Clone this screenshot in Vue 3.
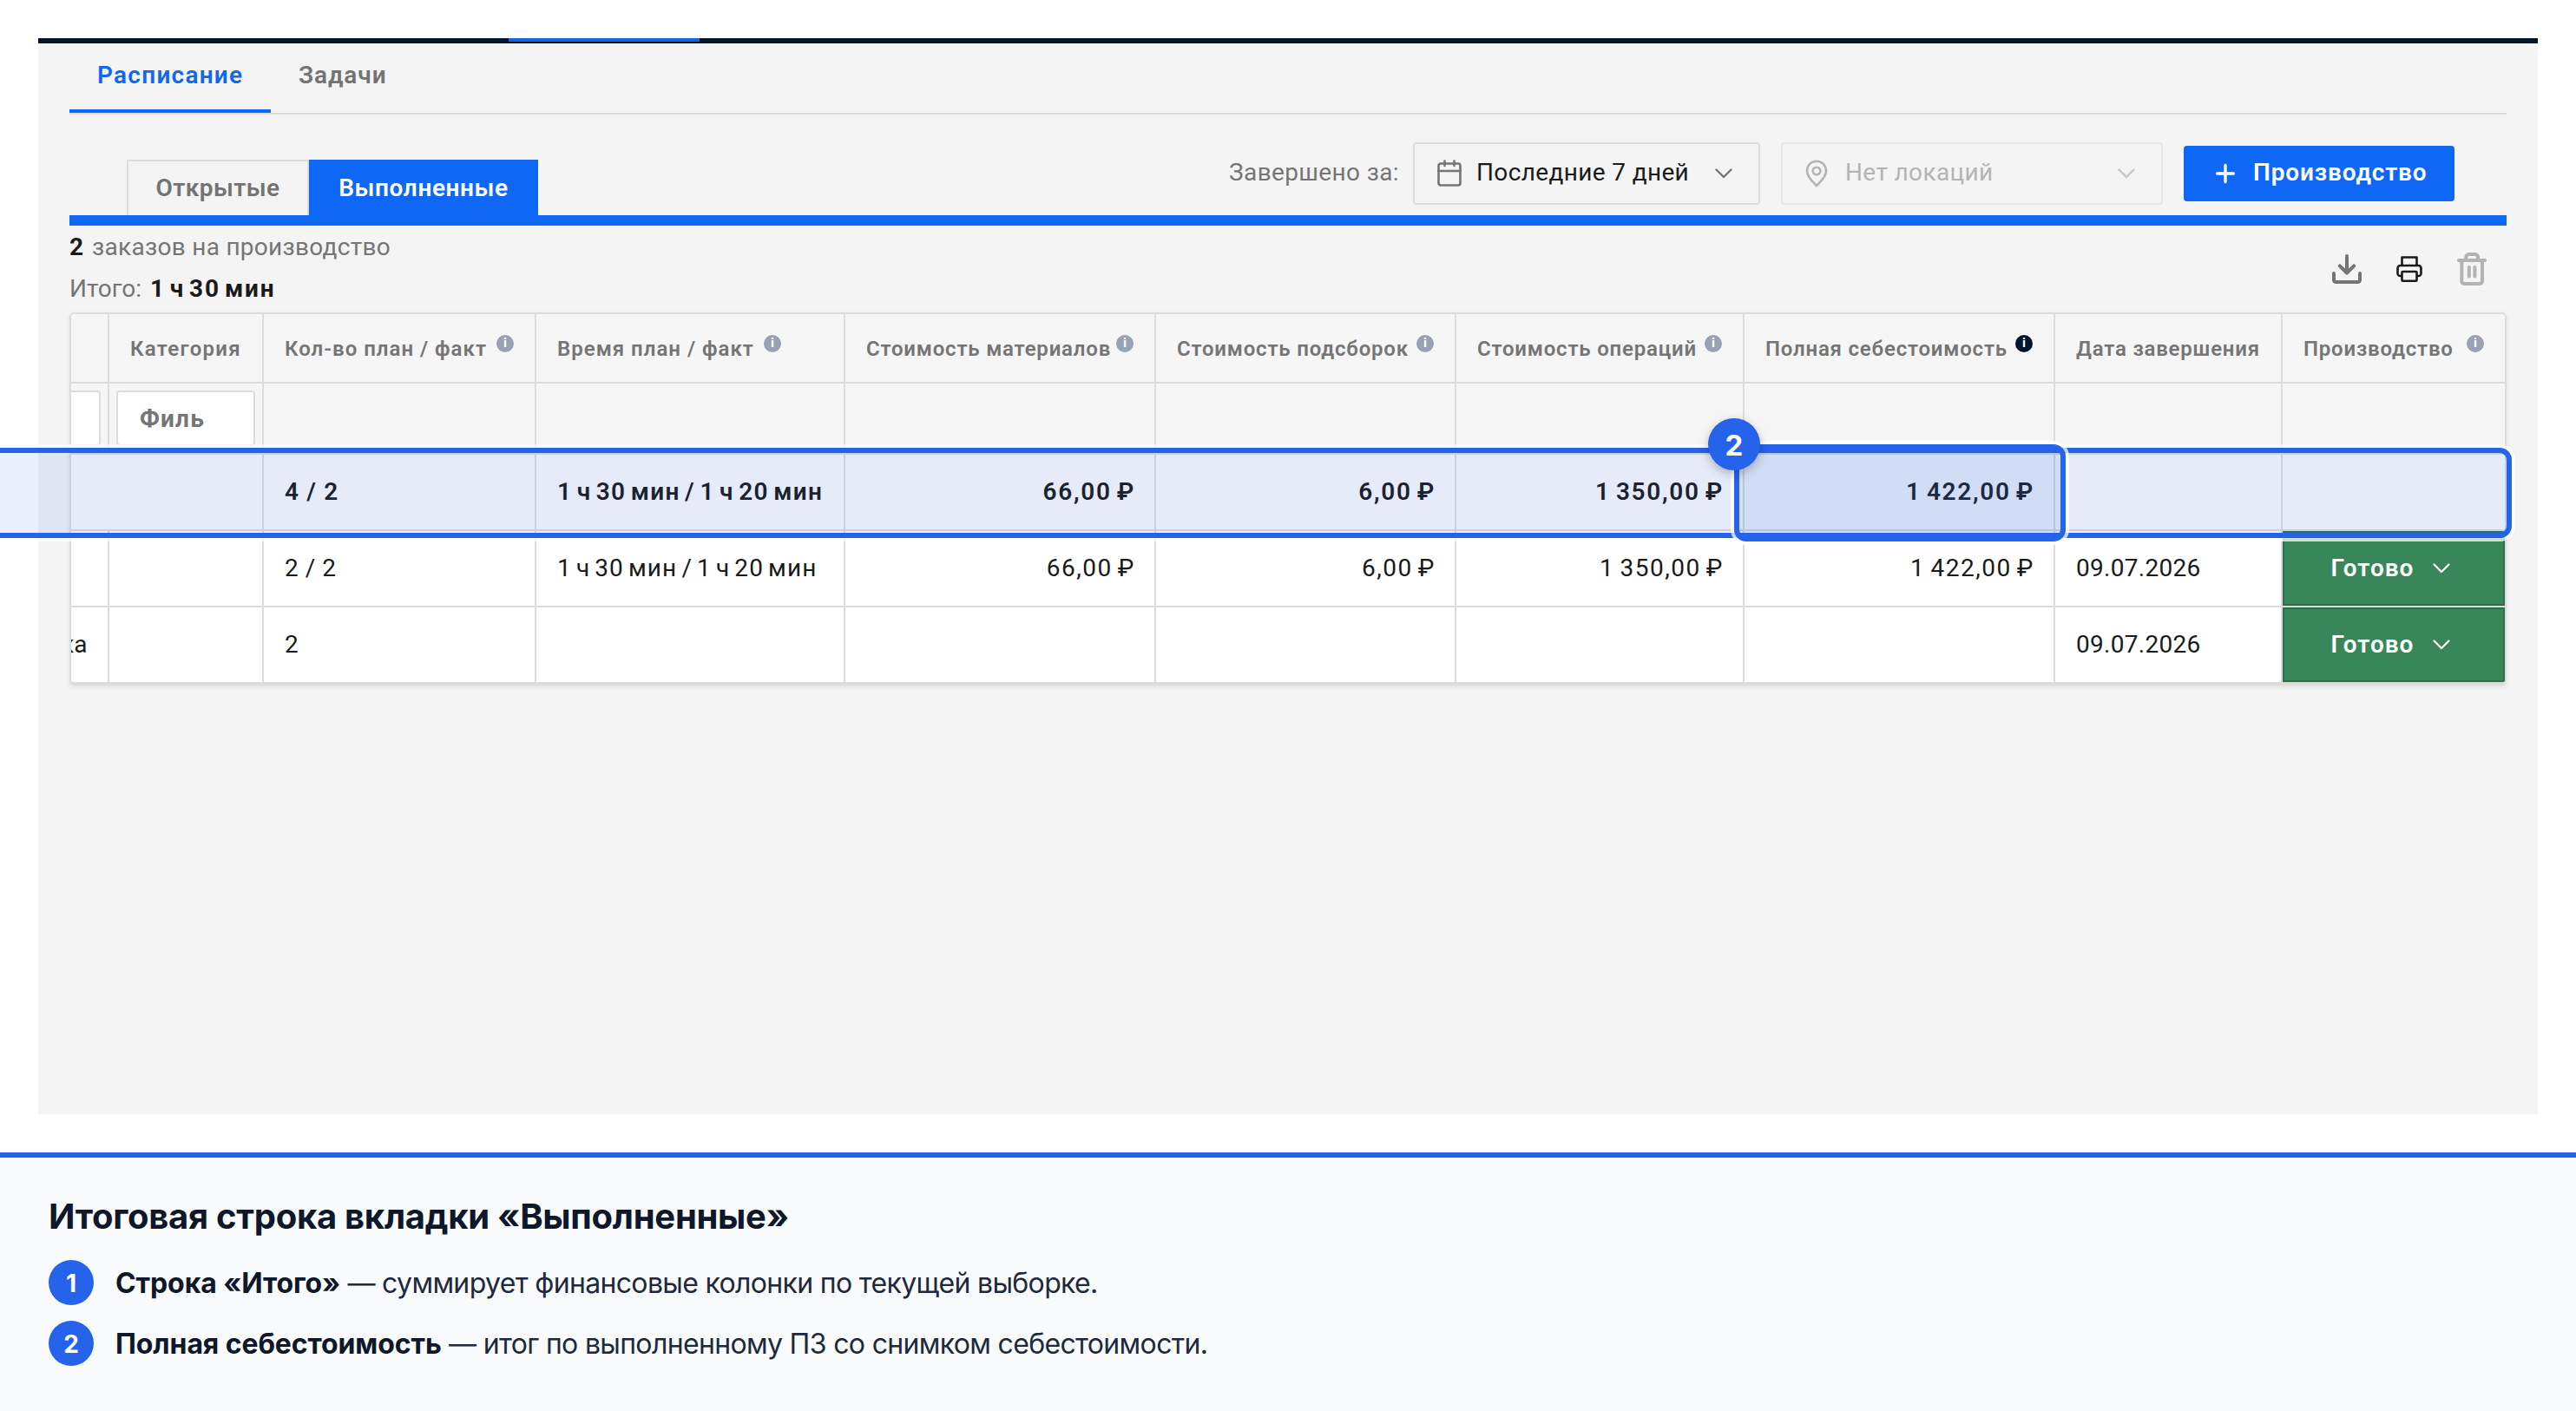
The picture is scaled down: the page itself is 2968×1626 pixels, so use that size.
<script setup>
/**
 * ProductionSchedule
 * - Completed production orders with a totals row
 * - Callouts over the table and a legend under it
 */
const columns = [
  { key: 'name', title: '' },
  { key: 'category', title: 'Категория', filter: true },
  { key: 'qty', title: 'Кол-во план / факт', info: true },
  { key: 'time', title: 'Время план / факт', info: true },
  { key: 'materials', title: 'Стоимость материалов', info: true, num: true },
  { key: 'parts', title: 'Стоимость подсборок', info: true, num: true },
  { key: 'operations', title: 'Стоимость операций', info: true, num: true },
  { key: 'total', title: 'Полная себестоимость', info: true, num: true, dark: true },
  { key: 'date', title: 'Дата завершения' },
  { key: 'status', title: 'Производство', info: true },
]

const totals = {
  qty: '4 / 2',
  time: '1 ч 30 мин / 1 ч 20 мин',
  materials: '66,00 ₽',
  parts: '6,00 ₽',
  operations: '1 350,00 ₽',
  total: '1 422,00 ₽',
}

const rows = [
  {
    id: 1,
    qty: '2 / 2',
    time: '1 ч 30 мин / 1 ч 20 мин',
    materials: '66,00 ₽',
    parts: '6,00 ₽',
    operations: '1 350,00 ₽',
    total: '1 422,00 ₽',
    date: '09.07.2026',
    status: 'Готово',
  },
  { id: 2, name: 'ка', qty: '2', date: '09.07.2026', status: 'Готово' },
]

const legend = [
  { n: 1, term: 'Строка «Итого»', text: 'суммирует финансовые колонки по текущей выборке.' },
  { n: 2, term: 'Полная себестоимость', text: 'итог по выполненному ПЗ со снимком себестоимости.' },
]
</script>

<template>
  <div class="page">
    <main class="panel">
      <div class="topbar"><span class="topbar-active"></span></div>

      <nav class="tabs">
        <a class="tab active">Расписание</a>
        <a class="tab">Задачи</a>
      </nav>

      <div class="toolbar">
        <div class="subtabs">
          <button class="subtab">Открытые</button>
          <button class="subtab active">Выполненные</button>
        </div>
        <div class="filters">
          <span class="label">Завершено за:</span>
          <div class="select">
            <svg class="ico-cal" viewBox="0 0 28 32" fill="none" stroke="currentColor" stroke-width="2.6" stroke-linecap="round">
              <rect x="1.5" y="4.5" width="25" height="25" rx="2.5" />
              <path d="M1.5 13h25M8.5 1.5v5.5M19.5 1.5v5.5" />
            </svg>
            <span class="value">Последние 7 дней</span>
            <svg class="chev" viewBox="0 0 20 12" fill="none" stroke="currentColor" stroke-width="2.4" stroke-linecap="round" stroke-linejoin="round"><path d="M1.5 1.5l8.5 8.5 8.5-8.5" /></svg>
          </div>
          <div class="select disabled">
            <svg class="ico-pin" viewBox="0 0 26 32" fill="none" stroke="currentColor" stroke-width="2.6" stroke-linejoin="round">
              <path d="M13 30C10 27 2 20 2 12.7a11 11 0 0 1 22 0C24 20 16 27 13 30z" />
              <circle cx="13" cy="13" r="4.3" />
            </svg>
            <span class="value">Нет локаций</span>
            <svg class="chev" viewBox="0 0 20 12" fill="none" stroke="currentColor" stroke-width="2.4" stroke-linecap="round" stroke-linejoin="round"><path d="M1.5 1.5l8.5 8.5 8.5-8.5" /></svg>
          </div>
          <button class="primary">
            <svg class="ico-plus" viewBox="0 0 24 24" fill="none" stroke="currentColor" stroke-width="3.4" stroke-linecap="round"><path d="M12 2.5v19M2.5 12h19" /></svg>
            <span>Производство</span>
          </button>
        </div>
      </div>

      <div class="summary">
        <div class="counts">
          <p><b>2</b> <span class="cnt">заказов на производство</span></p>
          <p>Итого: <b class="sum">1 ч 30 мин</b></p>
        </div>
        <div class="actions">
          <svg class="act" viewBox="0 0 40 40" fill="none" stroke="#757575" stroke-width="4" stroke-linecap="round" stroke-linejoin="round">
            <path d="M20 5v19M11.8 16.3l8.2 8.2 8.2-8.2M5 25v7.5a2.5 2.5 0 0 0 2.5 2.5h25a2.5 2.5 0 0 0 2.5-2.5V25" />
          </svg>
          <svg class="act" viewBox="0 0 40 40" fill="none" stroke="#1a1a1a" stroke-width="2.6" stroke-linejoin="round">
            <path d="M11.5 16V6.5h17V16M11.5 28H9.5a3 3 0 0 1-3-3V19a3 3 0 0 1 3-3h21a3 3 0 0 1 3 3v6a3 3 0 0 1-3 3h-2" />
            <rect x="11.5" y="23" width="17" height="10.7" rx="1" />
          </svg>
          <svg class="act" viewBox="0 0 40 40" fill="none" stroke="#b3b3b3" stroke-width="4" stroke-linecap="round" stroke-linejoin="round">
            <path d="M5 10h30M13.3 10V6.5a3.5 3.5 0 0 1 3.5-3.5h6.7A3.5 3.5 0 0 1 27 6.5V10M8.3 10v24a3 3 0 0 0 3 3h17.7a3 3 0 0 0 3-3V10M16.8 18v10.5M23.4 18v10.5" />
          </svg>
        </div>
      </div>

      <div class="table-wrap">
        <div class="grid">
          <div class="tr head">
            <div v-for="c in columns" :key="c.key" class="th" :class="[c.key, { num: c.num }]">
              <span>{{ c.title }}</span>
              <i v-if="c.info" class="info" :class="{ dark: c.dark }">i</i>
            </div>
          </div>
          <div class="tr filter">
            <div v-for="c in columns" :key="c.key" class="th" :class="c.key">
              <div v-if="c.key === 'name'" class="field cut"></div>
              <div v-if="c.filter" class="field">Филь</div>
            </div>
          </div>
          <div class="tr totals">
            <div v-for="c in columns" :key="c.key" class="td" :class="[c.key, { num: c.num }]">{{ totals[c.key] }}</div>
          </div>
          <div v-for="r in rows" :key="r.id" class="tr">
            <div v-for="c in columns" :key="c.key" class="td" :class="[c.key, { num: c.num }]">
              <button v-if="c.key === 'status'" class="status">
                <span>{{ r.status }}</span>
                <svg class="chev" viewBox="0 0 20 12" fill="none" stroke="currentColor" stroke-width="2.2" stroke-linecap="round" stroke-linejoin="round"><path d="M1.5 1.5l8.5 8.5 8.5-8.5" /></svg>
              </button>
              <span v-else>{{ r[c.key] }}</span>
            </div>
          </div>
        </div>
        <div class="mark mark-row"></div>
        <div class="mark mark-cell"><span class="badge pin">2</span></div>
      </div>
    </main>

    <footer class="legend">
      <h1>Итоговая строка вкладки «Выполненные»</h1>
      <p v-for="l in legend" :key="l.n" class="item">
        <span class="badge">{{ l.n }}</span>
        <span class="line"><b>{{ l.term }}</b> — {{ l.text }}</span>
      </p>
    </footer>
  </div>
</template>

<style>
body { background: #fff; }
</style>

<style scoped>
* { box-sizing: border-box; }
p, h1 { margin: 0; }
button { border: 0; padding: 0; background: none; font: inherit; color: inherit; letter-spacing: inherit; }
svg { display: block; flex: none; }

.page { width: 2968px; height: 1626px; overflow: hidden; padding-top: 44px; display: flex; flex-direction: column; position: relative; font-family: Roboto, "Liberation Sans", sans-serif; font-size: 28px; color: #1a1a1a; white-space: nowrap; }
.panel { width: 2880px; height: 1240px; margin: 0 44px; background: #f4f4f4; flex: none; }
.topbar { height: 6px; background: #00142b; padding-left: 542px; }
.topbar-active { display: block; width: 220px; height: 4px; background: #1264e0; }

.tabs { height: 82px; margin: 0 36px; border-bottom: 2px solid #dcdcdc; display: flex; }
.tab { height: 80px; padding: 0 32px; line-height: 73px; font-weight: 600; color: #737373; letter-spacing: .9px; }
.tab.active { width: 232px; color: #0f67f6; border-bottom: 4px solid #0f67f6; letter-spacing: 1.25px; }

.toolbar { height: 128px; margin: 0 36px; padding: 0 60px 0 66px; border-bottom: 12px solid #0f67f6; display: flex; justify-content: space-between; }
.subtabs { display: flex; align-items: flex-end; letter-spacing: .4px; }
.subtab { width: 210px; height: 64px; border: 2px solid #dcdcdc; border-bottom: 0; font-weight: 600; color: #737373; line-height: 62px; }
.subtab.active { width: 264px; height: 64px; background: #0f67f6; border-color: #0f67f6; color: #fff; letter-spacing: .6px; }
.filters { display: flex; align-items: center; padding-top: 20px; height: 116px; letter-spacing: .36px; }
.label { color: #757575; margin-right: 16px; padding-bottom: 3px; }
.select { width: 400px; height: 72px; border: 2px solid #dcdcdc; border-radius: 4px; display: flex; align-items: center; padding: 0 30px 0 26px; color: #757575; margin-right: 24px; }
.select .value { margin-left: 17px; flex: 1; color: #1a1a1a; padding-bottom: 3px; }
.select.disabled { width: 440px; opacity: .5; }
.select.disabled .value { color: #757575; margin-left: 20px; }
.select.disabled .chev { opacity: .7; }
.ico-cal { width: 28px; height: 32px; }
.ico-pin { width: 26px; height: 32px; }
.chev { width: 20px; height: 12px; }
.primary { width: 312px; height: 64px; border-radius: 4px; background: #0f67f6; color: #fff; font-weight: 600; display: flex; align-items: center; padding-left: 36px; gap: 20px; letter-spacing: .85px; }
.primary span { padding-bottom: 3px; }
.ico-plus { width: 24px; height: 24px; }

.summary { height: 100px; margin: 0 36px; display: flex; justify-content: space-between; }
.counts { color: #757575; padding-top: 1px; }
.counts p { line-height: 48px; }
.counts b { color: #1a1a1a; }
.counts .cnt { letter-spacing: .28px; margin-left: 3px; }
.counts .sum { letter-spacing: 1.9px; word-spacing: -4px; margin-left: 3px; }
.actions { display: flex; gap: 32px; padding: 30px 20px 0 0; }
.act { width: 40px; height: 40px; }

.table-wrap { position: relative; margin: 0 36px; height: 430px; }
.grid { height: 430px; border: 2px solid #dcdcdc; border-bottom-width: 4px; border-radius: 6px; overflow: hidden; box-shadow: 0 2px 6px rgba(0, 0, 0, .08); background: #fff; }
.tr { height: 88px; display: grid; grid-template-columns: 44px 178px 314px 356px 358px 346px 332px 358px 262px 256px; border-bottom: 2px solid #dcdcdc; }
.tr:last-child { border-bottom: 0; height: 86px; }
.head, .filter { background: #f6f6f6; }
.head { height: 80px; font-size: 24px; font-weight: 600; color: #757575; letter-spacing: .8px; }
.filter { height: 82px; }
.totals { background: #fbfbfb; font-weight: 600; }
.th, .td { border-right: 2px solid #dcdcdc; padding-left: 24px; display: flex; align-items: center; min-width: 0; }
.td:last-child, .th:last-child { border-right: 0; }
.totals .name { border-right-color: transparent; }
.head .th { padding-top: 2px; padding-right: 24px; }
.head .name { padding: 0; }
.head .category { letter-spacing: 1.3px; padding-right: 0; }
.head .qty, .head .time { letter-spacing: 1px; }
.td { padding-bottom: 2px; }
.td.num { justify-content: flex-end; padding: 0 22px 2px 0; letter-spacing: 1.55px; word-spacing: -2.5px; }
.td.qty { letter-spacing: 2px; word-spacing: -3px; }
.td.time { letter-spacing: 1.1px; word-spacing: -3px; }
.td.date { letter-spacing: .3px; }
.td.name { padding-left: 0; }
.td.name span { margin-left: -12px; }
.totals .td.num { letter-spacing: 1.7px; }
.totals .td.qty { letter-spacing: 2.7px; }
.totals .td.time { letter-spacing: 1.35px; }
.info { width: 20px; height: 20px; border-radius: 50%; background: #98a2b3; color: #fff; font: 700 15px/18px Roboto, sans-serif; letter-spacing: 0; text-align: center; margin: -12px 0 0 11px; flex: none; }
.num .info, .status .info { margin-left: auto; }
.info.dark { background: #00142b; }
.filter .th { padding: 8px; align-items: flex-start; }
.field { width: 160px; height: 64px; border: 2px solid #dcdcdc; border-radius: 4px; background: #fff; padding-left: 25px; line-height: 62px; font-size: 28px; font-weight: 700; color: #757575; letter-spacing: 1.2px; }
.filter .name { padding: 8px 0; }
.field.cut { width: 34px; border-left: 0; border-radius: 0 4px 4px 0; padding: 0; }
.td.status { padding: 0; }
button.status { width: 256px; height: 86px; border: 2px solid #2b7346; background: #388659; color: #fff; font-weight: 600; display: flex; align-items: center; justify-content: center; gap: 22px; padding-right: 7px; letter-spacing: 1px; }
button.status span { padding-bottom: 2px; }

/* callouts */
.mark { position: absolute; border: 6px solid #2563eb; background: rgba(37, 99, 235, .1); box-shadow: 0 0 0 4px rgba(255, 255, 255, .75); border-radius: 14px; }
.mark-row { left: -140px; top: 156px; width: 2954px; height: 104px; }
.mark-cell { left: 1918px; top: 152px; width: 382px; height: 112px; }
.badge { width: 52px; height: 52px; border-radius: 50%; background: #2563eb; color: #fff; display: flex; align-items: center; justify-content: center; font: 700 28px/1 Inter, sans-serif; letter-spacing: 0; flex: none; }
.badge.pin { position: absolute; left: -36px; top: -36px; width: 60px; height: 60px; padding-top: 2px; font-size: 33px; box-shadow: 0 4px 12px rgba(0, 0, 0, .25); }
.item .badge { padding-top: 2px; }

.legend { margin-top: 44px; height: 298px; border-top: 6px solid #2563eb; background: #f8fafc; padding: 44px 56px 0; font-family: Inter, sans-serif; color: #1e293b; position: relative; }
.legend h1 { font-size: 40px; line-height: 48px; font-weight: 700; color: #0f172a; margin-bottom: 26px; letter-spacing: -.28px; }
.item { display: flex; align-items: center; height: 52px; margin-bottom: 18px; gap: 25px; font-size: 32px; }
.line { letter-spacing: -.66px; }
.item b { color: #0f172a; letter-spacing: -.1px; }
</style>
